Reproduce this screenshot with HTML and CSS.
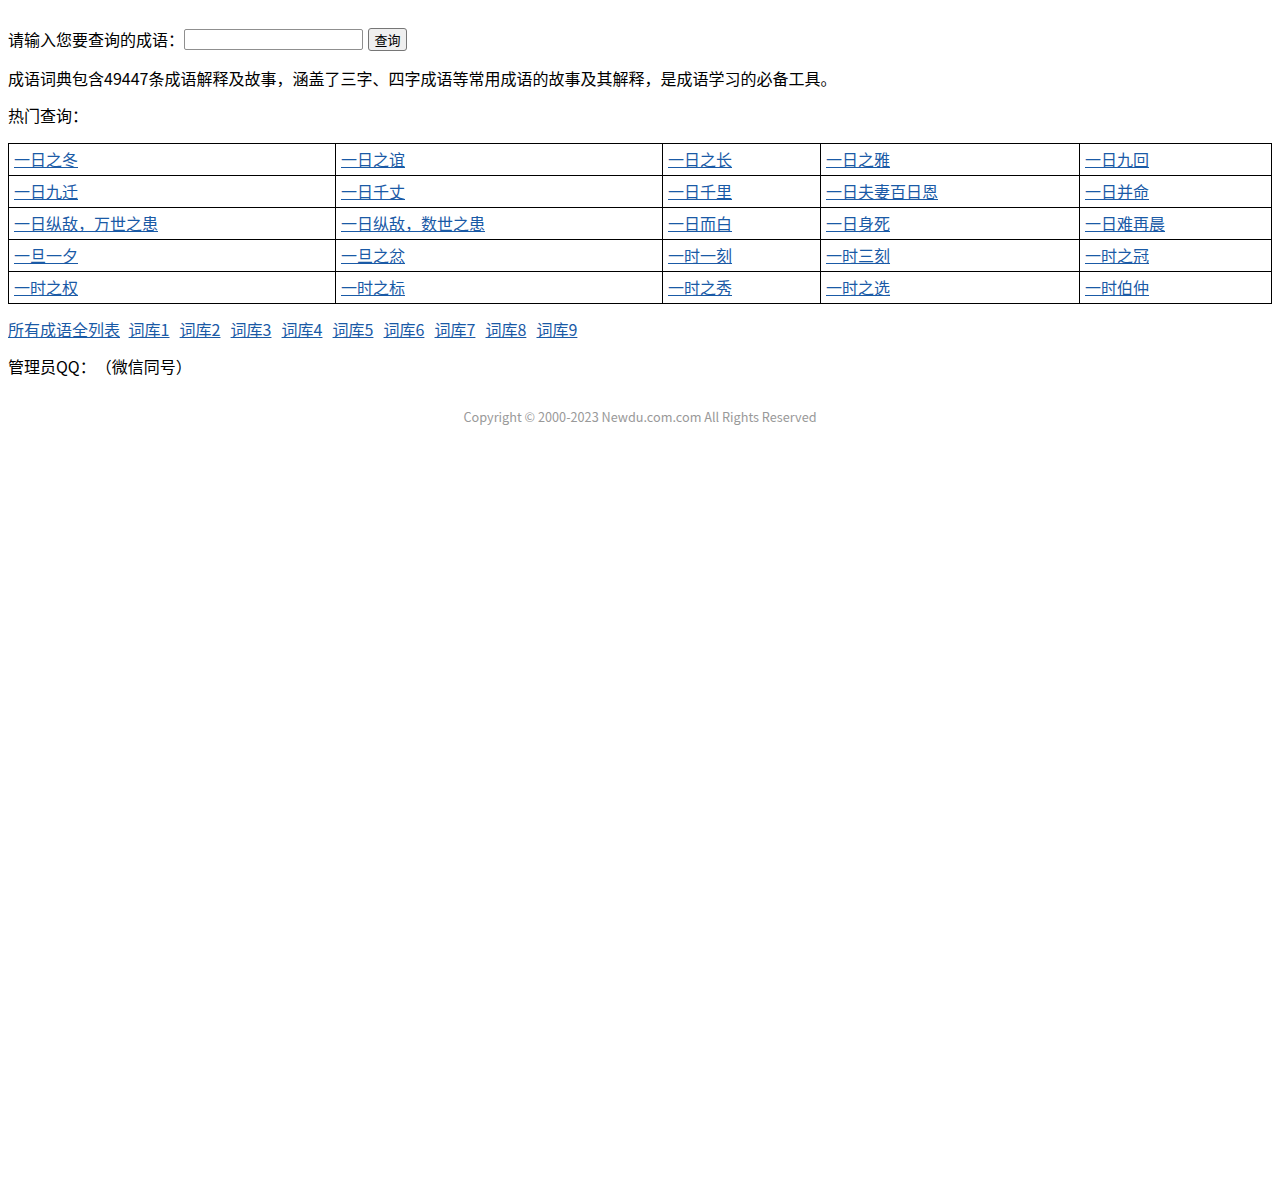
FILE: index.html
```
<!DOCTYPE html>
<html lang="zh-CN">
<head>
<meta charset="utf-8">
<title>成语词典</title>
<link rel="stylesheet" href="styles.css">
</head>
<body>
<div class="page">
<form class="search">
<p class="searchline">请输入您要查询的成语：<input class="q" type="text"><button class="btn" type="button">查询</button></p>
</form>
<p>成语词典包含49447条成语解释及故事，涵盖了三字、四字成语等常用成语的故事及其解释，是成语学习的必备工具。</p>
<p class="hotlabel">热门查询：</p>
<table class="hot">
<colgroup><col class="c1"><col class="c2"><col class="c3"><col class="c4"><col class="c5"></colgroup>
<tr><td><a href="#">一日之冬</a></td><td><a href="#">一日之谊</a></td><td><a href="#">一日之长</a></td><td><a href="#">一日之雅</a></td><td><a href="#">一日九回</a></td></tr>
<tr><td><a href="#">一日九迁</a></td><td><a href="#">一日千丈</a></td><td><a href="#">一日千里</a></td><td><a href="#">一日夫妻百日恩</a></td><td><a href="#">一日并命</a></td></tr>
<tr><td><a href="#">一日纵敌，万世之患</a></td><td><a href="#">一日纵敌，数世之患</a></td><td><a href="#">一日而白</a></td><td><a href="#">一日身死</a></td><td><a href="#">一日难再晨</a></td></tr>
<tr><td><a href="#">一旦一夕</a></td><td><a href="#">一旦之忿</a></td><td><a href="#">一时一刻</a></td><td><a href="#">一时三刻</a></td><td><a href="#">一时之冠</a></td></tr>
<tr><td><a href="#">一时之权</a></td><td><a href="#">一时之标</a></td><td><a href="#">一时之秀</a></td><td><a href="#">一时之选</a></td><td><a href="#">一时伯仲</a></td></tr>
</table>
<p class="links"><a class="all" href="#">所有成语全列表</a> <a href="#">词库1</a> <a href="#">词库2</a> <a href="#">词库3</a> <a href="#">词库4</a> <a href="#">词库5</a> <a href="#">词库6</a> <a href="#">词库7</a> <a href="#">词库8</a> <a href="#">词库9</a></p>
<p>管理员QQ：（微信同号）</p>
<div class="copy">Copyright © 2000-2023 Newdu.com.com All Rights Reserved</div>
</div>
</body>
</html>
```
FILE: styles.css
```
html, body {
  background: #fff;
}
body {
  margin: 8px;
  font-family: "Noto Sans CJK SC", "Noto Sans", sans-serif;
  font-size: 16px;
  line-height: 21px;
  color: #000;
  text-spacing-trim: space-all;
}
p {
  margin: 16px 0;
}
.search {
  margin: 0;
  padding-top: 3px;
}
.searchline {
  display: flex;
  align-items: center;
  height: 25px;
}
.q {
  box-sizing: border-box;
  width: 179px;
  height: 21px;
  margin: 0 5px 0 0;
  border: 1px solid #8f8f8f;
  border-radius: 2px;
  padding: 1px 2px;
  font-size: 13px;
}
.btn {
  box-sizing: border-box;
  height: 23px;
  width: 39px;
  padding: 0;
  margin: 0;
  font-family: "Noto Sans CJK SC", sans-serif;
  font-size: 13px;
  line-height: 19px;
  color: #000;
  background: #efefef;
  border: 1px solid #767676;
  border-radius: 3px;
}
a {
  color: #1a5aa6;
  text-decoration: underline;
}
.hotlabel {
  margin-bottom: 17px;
}
.hot {
  width: 1264px;
  border-collapse: collapse;
  border: 1px solid #000;
  table-layout: fixed;
}
.hot td {
  border: 1px solid #000;
  padding: 5px;
  height: 21px;
  white-space: nowrap;
  vertical-align: middle;
}
.c1 { width: 327px; }
.c2 { width: 327px; }
.c3 { width: 158px; }
.c4 { width: 259px; }
.links {
  margin-top: 15px;
}
.links a {
  margin-right: 6.5px;
}
.links a.all {
  margin-right: 5px;
}
.copy {
  text-align: center;
  font-size: 12.7px;
  color: #999;
  margin-top: 31px;
  line-height: 18px;
}
```
